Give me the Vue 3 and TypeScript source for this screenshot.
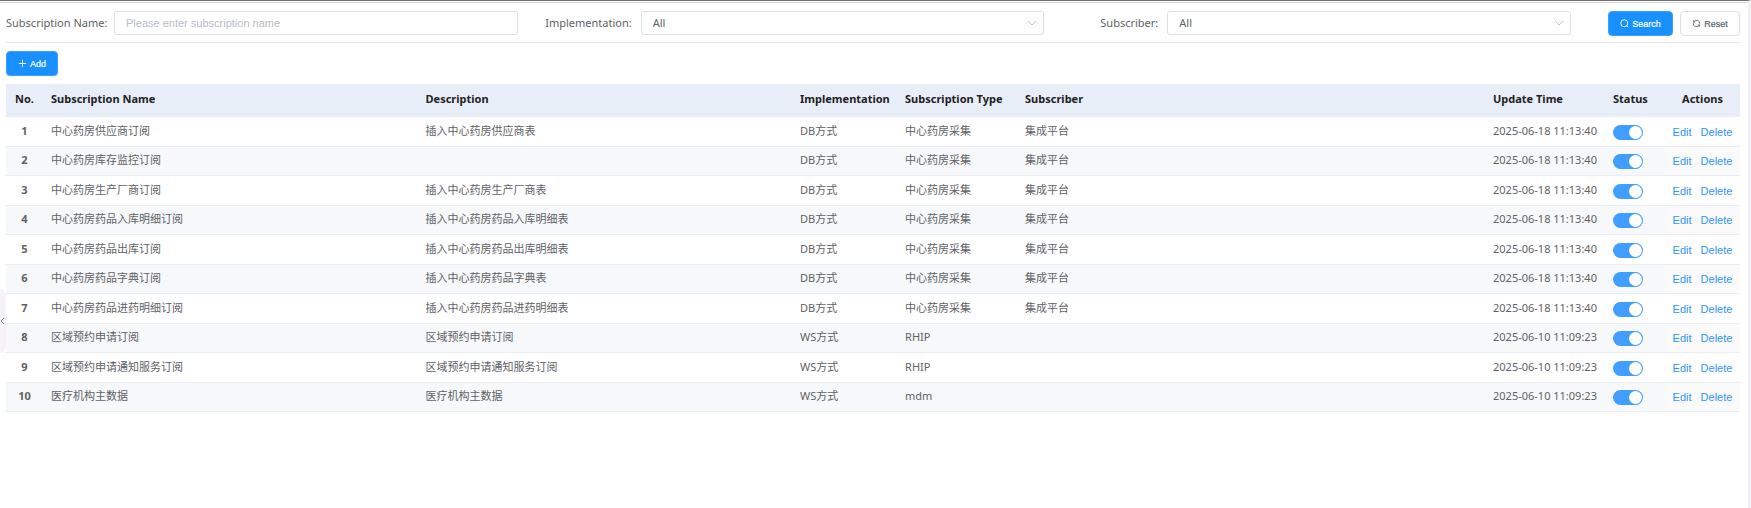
<script setup lang="ts">
import { reactive, ref } from 'vue'

interface Subscription {
  name: string
  description: string
  implementation: string
  type: string
  subscriber: string
  updated: string
  enabled: boolean
}

const FIRST = '2025-06-18 11:13:40'
const SECOND = '2025-06-10 11:09:23'

function row(name: string, description: string, implementation: string, type: string, subscriber: string, updated: string): Subscription {
  return { name, description, implementation, type, subscriber, updated, enabled: true }
}

const rows = reactive<Subscription[]>([
  row('中心药房供应商订阅', '插入中心药房供应商表', 'DB方式', '中心药房采集', '集成平台', FIRST),
  row('中心药房库存监控订阅', '', 'DB方式', '中心药房采集', '集成平台', FIRST),
  row('中心药房生产厂商订阅', '插入中心药房生产厂商表', 'DB方式', '中心药房采集', '集成平台', FIRST),
  row('中心药房药品入库明细订阅', '插入中心药房药品入库明细表', 'DB方式', '中心药房采集', '集成平台', FIRST),
  row('中心药房药品出库订阅', '插入中心药房药品出库明细表', 'DB方式', '中心药房采集', '集成平台', FIRST),
  row('中心药房药品字典订阅', '插入中心药房药品字典表', 'DB方式', '中心药房采集', '集成平台', FIRST),
  row('中心药房药品进药明细订阅', '插入中心药房药品进药明细表', 'DB方式', '中心药房采集', '集成平台', FIRST),
  row('区域预约申请订阅', '区域预约申请订阅', 'WS方式', 'RHIP', '', SECOND),
  row('区域预约申请通知服务订阅', '区域预约申请通知服务订阅', 'WS方式', 'RHIP', '', SECOND),
  row('医疗机构主数据', '医疗机构主数据', 'WS方式', 'mdm', '', SECOND),
])

const keyword = ref('')
const implementation = ref('all')
const subscriber = ref('all')

function reset() {
  keyword.value = ''
  implementation.value = 'all'
  subscriber.value = 'all'
}
</script>

<template>
  <main class="page">
    <form class="filters" @submit.prevent>
      <div class="field">
        <label for="name">Subscription Name:</label>
        <input id="name" v-model="keyword" class="control" type="text" placeholder="Please enter subscription name" />
      </div>
      <div class="field">
        <label for="implementation">Implementation:</label>
        <div class="select-wrap">
          <select id="implementation" v-model="implementation" class="control">
            <option value="all">All</option>
            <option value="db">DB方式</option>
            <option value="ws">WS方式</option>
          </select>
          <svg class="caret" viewBox="0 0 10 10"><path d="M1 3l4 4 4-4" /></svg>
        </div>
      </div>
      <div class="field">
        <label for="subscriber">Subscriber:</label>
        <div class="select-wrap">
          <select id="subscriber" v-model="subscriber" class="control">
            <option value="all">All</option>
            <option value="platform">集成平台</option>
          </select>
          <svg class="caret" viewBox="0 0 10 10"><path d="M1 3l4 4 4-4" /></svg>
        </div>
      </div>
      <div class="buttons">
        <button class="btn primary search" type="submit">
          <svg viewBox="0 0 10 10"><circle cx="4.7" cy="4.7" r="3.9" /><path d="M7.4 7.4L9.2 9.2" /></svg>
          Search
        </button>
        <button class="btn reset" type="button" @click="reset">
          <svg viewBox="0 0 10 10"><path d="M1.6 1.4v2h2M1.9 3.2A3.6 3.6 0 0 1 8.6 5.2M8.4 8.6v-2h-2M8.1 6.8A3.6 3.6 0 0 1 1.4 4.8" /></svg>
          Reset
        </button>
      </div>
    </form>

    <div class="toolbar">
      <button class="btn primary add" type="button">
        <svg viewBox="0 0 10 10"><path d="M5 1v8M1 5h8" /></svg>
        Add
      </button>
    </div>

    <table>
      <colgroup>
        <col class="c-no" />
        <col class="c-text" />
        <col class="c-text" />
        <col class="c-impl" />
        <col class="c-type" />
        <col />
        <col class="c-time" />
        <col class="c-status" />
        <col class="c-actions" />
      </colgroup>
      <thead>
        <tr>
          <th class="center">No.</th>
          <th>Subscription Name</th>
          <th>Description</th>
          <th>Implementation</th>
          <th>Subscription Type</th>
          <th>Subscriber</th>
          <th>Update Time</th>
          <th>Status</th>
          <th class="center">Actions</th>
        </tr>
      </thead>
      <tbody>
        <tr v-for="(item, i) in rows" :key="item.name">
          <td class="center number">{{ i + 1 }}</td>
          <td>{{ item.name }}</td>
          <td>{{ item.description }}</td>
          <td>{{ item.implementation }}</td>
          <td>{{ item.type }}</td>
          <td>{{ item.subscriber }}</td>
          <td>{{ item.updated }}</td>
          <td class="status"><input v-model="item.enabled" class="switch" type="checkbox" role="switch" :aria-label="item.name" /></td>
          <td class="actions">
            <div class="links"><a href="#">Edit</a><a href="#">Delete</a></div>
          </td>
        </tr>
      </tbody>
    </table>

    <button class="handle" type="button" aria-label="Collapse">
      <svg viewBox="0 0 5 8"><path d="M4 1L1 4l3 3" /></svg>
    </button>
  </main>
</template>

<style>
body {
  margin: 0;
  background: #fff;
}
</style>

<style scoped>
.page {
  position: relative;
  box-sizing: border-box;
  min-height: 100vh;
  padding: 0 8px 0 6px;
  border-top: 1px solid #6f6e72;
  border-right: 3px solid #f0eff5;
  color: #606266;
  font: 11px/16px "Noto Sans", "Noto Sans CJK SC", sans-serif;
}

.page::before {
  content: "";
  display: block;
  height: 1px;
  margin: 0 -8px 0 -6px;
  padding-top: 1px;
  background: #d9d8dc content-box;
}

.filters {
  display: grid;
  grid-template-columns: 1fr 1fr 1fr auto;
  gap: 15px;
  padding: 8px 0 6px;
  border-bottom: 1px solid #e6e7ea;
}

.field {
  display: flex;
  align-items: center;
  height: 24px;
}

.field label {
  flex: none;
  box-sizing: border-box;
  width: 108px;
  padding-right: 9px;
  text-align: right;
  white-space: nowrap;
}

.control {
  box-sizing: border-box;
  flex: 1;
  width: 100%;
  min-width: 0;
  height: 24px;
  padding: 0 11px 2px;
  border: 1px solid #dcdfe6;
  border-radius: 3px;
  outline: none;
  background: #fff;
  color: #606266;
  font: 11px "Noto Sans", "Noto Sans CJK SC", sans-serif;
  appearance: none;
}

.control::placeholder {
  color: #b9bdc6;
  font-family: "Liberation Sans", Arial, sans-serif;
}

.select-wrap {
  position: relative;
  display: flex;
  flex: 1;
}

.caret {
  position: absolute;
  top: 7px;
  right: 7px;
  width: 10px;
  height: 10px;
  pointer-events: none;
}

svg {
  fill: none;
  stroke: currentColor;
  stroke-width: 1;
}

.caret {
  color: #c0c4cc;
}

.buttons {
  display: flex;
  gap: 7px;
  padding-left: 22px;
}

.btn {
  box-sizing: border-box;
  display: flex;
  align-items: center;
  justify-content: center;
  gap: 3px;
  height: 25px;
  padding: 0;
  border: 1px solid #dcdfe6;
  border-radius: 4px;
  background: #fff;
  color: #606266;
  font: 9px "Liberation Sans", Arial, sans-serif;
  -webkit-text-stroke: 0.2px currentColor;
}

.btn svg {
  width: 9px;
  height: 9px;
}

.btn.primary {
  border-color: #409eff;
  background: #1890ff;
  color: #fff;
}

.search {
  width: 65px;
}

.reset {
  width: 60px;
}

.add {
  width: 52px;
}

.toolbar {
  padding: 8px 0;
}

table {
  width: 100%;
  table-layout: fixed;
  border-collapse: separate;
  border-spacing: 0;
}

.c-no {
  width: 37px;
}

.c-text {
  width: 21.6%;
}

.c-impl {
  width: 105px;
}

.c-type,
.c-time {
  width: 120px;
}

.c-status {
  width: 60px;
}

.c-actions {
  width: 75px;
}

th,
td {
  box-sizing: border-box;
  padding: 0 8px 2px;
  overflow: hidden;
  text-align: left;
  white-space: nowrap;
}

th {
  height: 33px;
  padding-bottom: 4px;
  background: #e8eef8;
  color: #222;
  font-weight: 700;
}

td {
  height: 30px;
  border-bottom: 1px solid #e9edf4;
}

tbody tr:nth-child(even) td {
  height: 29px;
  background: #f6f8fa;
}

tbody tr:nth-child(even) td.actions {
  background: #fafafa;
}

.center {
  padding-right: 0;
  padding-left: 0;
  text-align: center;
}

.number {
  font-weight: 700;
}

td.status {
  padding-bottom: 0;
}

.switch {
  display: block;
  box-sizing: border-box;
  width: 30px;
  height: 15px;
  margin: 1px 0 0;
  padding: 1px;
  border-radius: 8px;
  background: #c0c4cc;
  appearance: none;
}

.switch::before {
  content: "";
  display: block;
  width: 13px;
  height: 13px;
  border-radius: 50%;
  background: #fff;
}

.switch:checked {
  background: #409eff;
}

.switch:checked::before {
  margin-left: auto;
}

td.actions {
  padding: 0;
}

.links {
  display: flex;
  justify-content: center;
  gap: 9px;
  font-family: "Liberation Sans", Arial, sans-serif;
}

a {
  color: #2f94ff;
  text-decoration: none;
}

.handle {
  position: absolute;
  top: 288px;
  left: 0;
  display: flex;
  align-items: center;
  width: 6px;
  height: 64px;
  padding: 0;
  border: 0;
  border-radius: 0 6px 6px 0;
  background: #f5f3f7;
  color: #8c8c92;
}

.handle svg {
  width: 5px;
  height: 8px;
}
</style>
